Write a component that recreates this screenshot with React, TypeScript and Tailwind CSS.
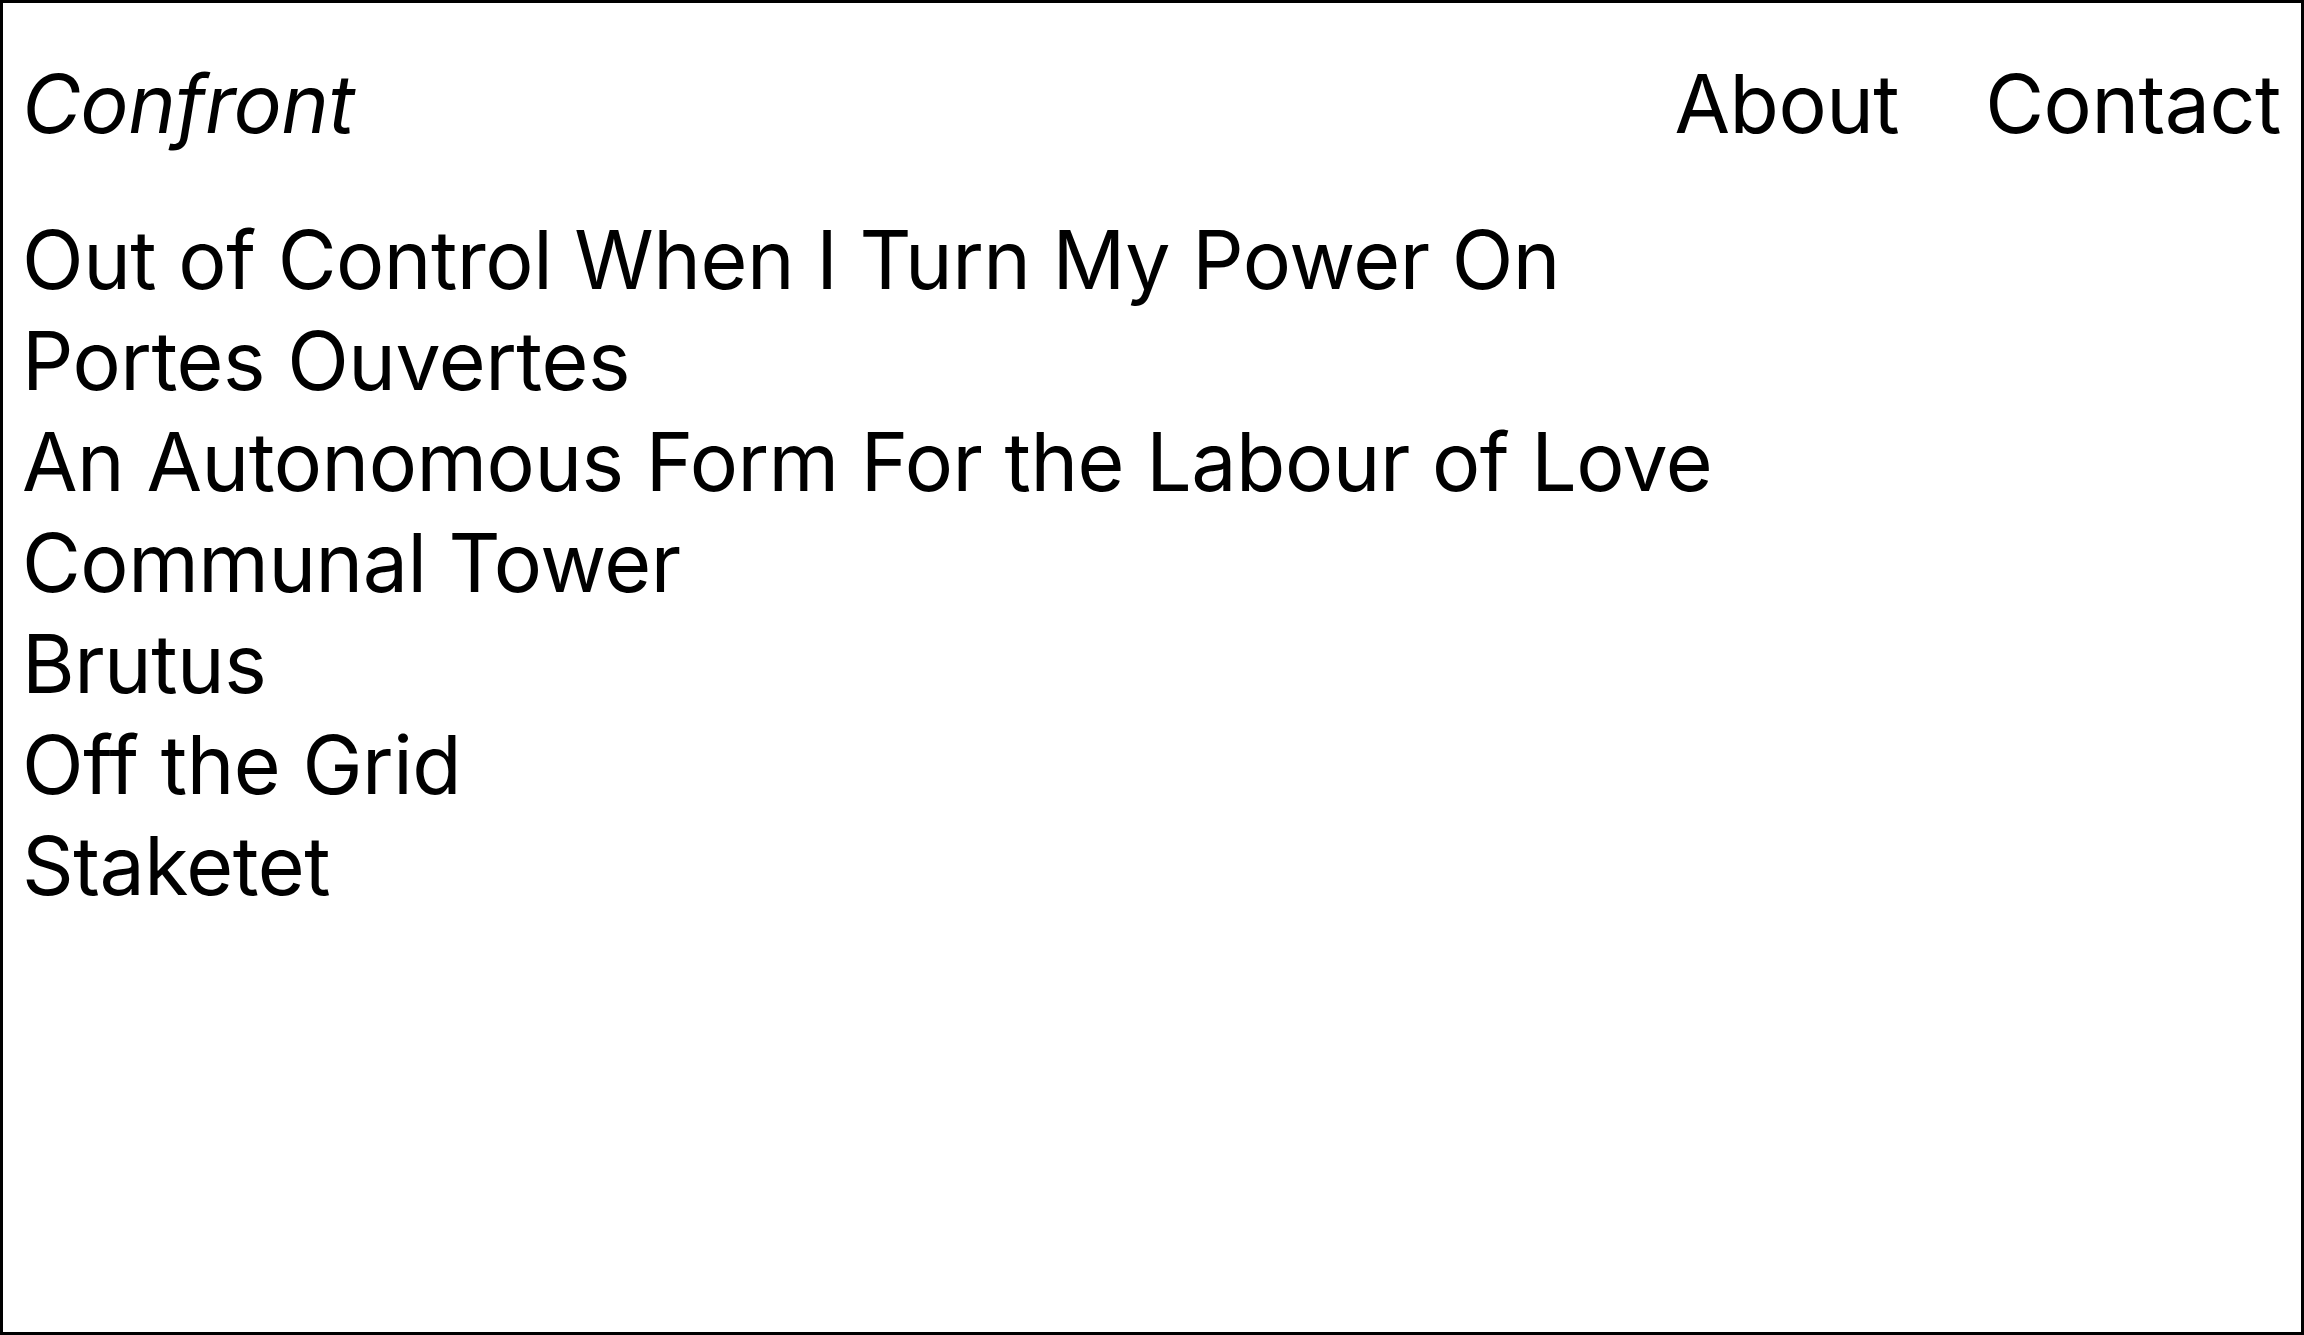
export default function App() {
  const projects = [
    "Out of Control When I Turn My Power On",
    "Portes Ouvertes",
    "An Autonomous Form For the Labour of Love",
    "Communal Tower",
    "Brutus",
    "Off the Grid",
    "Staketet",
  ];

  return (
    <div
      className="h-screen w-full border-[3px] border-black bg-white pl-[19px] pr-[20px] pt-[50px] text-black text-[80.6px] leading-[101px] tracking-[-0.5px]"
      style={{ fontFamily: "Inter, 'Noto Sans', sans-serif" }}
    >
      <header className="flex items-start justify-between mb-[55px]">
        <a className="italic">Confront</a>
        <nav className="flex gap-[86px]">
          <a>About</a>
          <a>Contact</a>
        </nav>
      </header>
      <ul>
        {projects.map((p) => (
          <li key={p}>
            <a>{p}</a>
          </li>
        ))}
      </ul>
    </div>
  );
}
